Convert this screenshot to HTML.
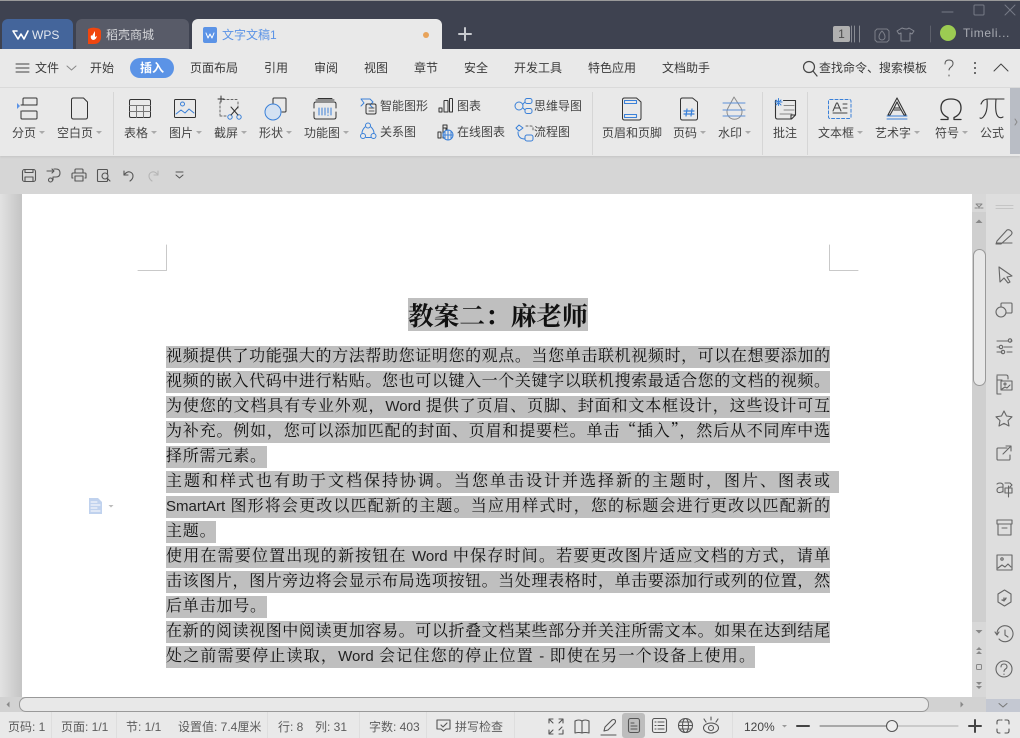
<!DOCTYPE html>
<html lang="zh-CN"><head><meta charset="utf-8"><title>文字文稿1</title>
<style>
html,body{margin:0;padding:0;width:1020px;height:738px;overflow:hidden;background:#d6d6d6}
body{position:relative;font-family:"Liberation Sans","Noto Sans CJK SC",sans-serif;font-size:12px;color:#3c3c3c}
.b{position:absolute}
.t{position:absolute;white-space:nowrap;line-height:16px;font-size:12px;color:#444}
.c:after{content:"";position:absolute;right:-9px;top:6px;border:3px solid transparent;border-top:3px solid #aaa;border-bottom:0}
.m{position:absolute;white-space:nowrap;top:60px;line-height:16px;font-size:12px;color:#3a3a3a}
.s{position:absolute;white-space:nowrap;top:719px;line-height:16px;font-size:12px;color:#5c5c5c}
.l{position:absolute;left:166px;width:664px;height:22px;line-height:18px;background:#bfbfbf;font-family:"Noto Serif CJK SC",serif;font-size:16px;color:#111;white-space:nowrap;text-align:justify;text-align-last:justify}
.l b{font-weight:normal;font-family:"Liberation Sans",sans-serif;font-size:15px;color:#222}
.sep{position:absolute;width:1px;background:#d6d6d6}
svg{position:absolute;left:0;top:0}
</style></head><body>
<div class="b" style="left:0;top:0;width:1020px;height:49px;background:#3e4250"></div>
<div class="b" style="left:0;top:0;width:1020px;height:1px;background:#9a9a9a"></div>
<div class="b" style="left:2px;top:19px;width:71px;height:30px;background:#44659b;border-radius:6px 6px 0 0"></div>
<div class="b" style="left:76px;top:19px;width:113px;height:30px;background:#585b68;border-radius:6px 6px 0 0"></div>
<div class="b" style="left:192px;top:19px;width:250px;height:30px;background:#e9e9e9;border-radius:6px 6px 0 0"></div>
<div class="t" style="left:32px;top:27px;color:#e4e8f0">WPS</div>
<div class="t" style="left:106px;top:27px;color:#d6d7da">稻壳商城</div>
<div class="t" style="left:222px;top:27px;color:#5b93e6">文字文稿1</div>
<div class="t" style="left:963px;top:25px;color:#a8abb2;letter-spacing:.6px">Timeli...</div>
<div class="b" style="left:833px;top:26px;width:17px;height:16px;background:#b0b0b0;border-radius:2px;text-align:center;line-height:16px;color:#4a4a4a;font-size:12px">1</div>

<div class="b" style="left:0;top:49px;width:1020px;height:38px;background:#e9e9e9;border-bottom:1px solid #dcdcdc"></div>
<div class="b" style="left:0;top:88px;width:1020px;height:68px;background:#e9e9e9;box-shadow:0 1px 2px #c4c4c4"></div>
<div class="b" style="left:1010px;top:88px;width:10px;height:66px;background:#b9bdc5"></div>

<div class="m" style="left:35px">文件</div><div class="m" style="left:90px">开始</div>
<div class="b" style="left:130px;top:58px;width:44px;height:20px;background:#5b93e6;border-radius:10px;color:#fff;text-align:center;line-height:20px;font-weight:bold">插入</div>
<div class="m" style="left:190px">页面布局</div><div class="m" style="left:264px">引用</div><div class="m" style="left:314px">审阅</div><div class="m" style="left:364px">视图</div><div class="m" style="left:414px">章节</div><div class="m" style="left:464px">安全</div><div class="m" style="left:514px">开发工具</div><div class="m" style="left:588px">特色应用</div><div class="m" style="left:662px">文档助手</div><div class="m" style="left:819px">查找命令、搜索模板</div>

<div class="sep" style="left:113px;top:92px;height:63px"></div><div class="sep" style="left:592px;top:92px;height:63px"></div><div class="sep" style="left:762px;top:92px;height:63px"></div><div class="sep" style="left:807px;top:92px;height:63px"></div>

<div class="t c" style="left:12px;top:125px">分页</div><div class="t c" style="left:57px;top:125px">空白页</div><div class="t c" style="left:124px;top:125px">表格</div><div class="t c" style="left:169px;top:125px">图片</div><div class="t c" style="left:214px;top:125px">截屏</div><div class="t c" style="left:259px;top:125px">形状</div><div class="t c" style="left:304px;top:125px">功能图</div>
<div class="t" style="left:380px;top:98px">智能图形</div><div class="t" style="left:380px;top:124px">关系图</div><div class="t" style="left:457px;top:98px">图表</div><div class="t" style="left:457px;top:124px">在线图表</div><div class="t" style="left:534px;top:98px">思维导图</div><div class="t" style="left:534px;top:124px">流程图</div>
<div class="t" style="left:602px;top:125px">页眉和页脚</div><div class="t c" style="left:673px;top:125px">页码</div><div class="t c" style="left:718px;top:125px">水印</div><div class="t" style="left:773px;top:125px">批注</div><div class="t c" style="left:818px;top:125px">文本框</div><div class="t c" style="left:875px;top:125px">艺术字</div><div class="t c" style="left:935px;top:125px">符号</div><div class="t" style="left:980px;top:125px">公式</div>

<!-- document -->
<div class="b" style="left:0;top:194px;width:22px;height:503px;background:linear-gradient(90deg,#e2e2e2 0,#c4c4c4 100%)"></div>
<div class="b" style="left:22px;top:194px;width:950px;height:503px;background:#fff"></div>
<div class="b" style="left:972px;top:194px;width:14px;height:518px;background:#d8d8d8"></div>
<div class="b" style="left:972px;top:212px;width:14px;height:410px;background:#cfcfcf"></div>
<div class="b" style="left:986px;top:194px;width:34px;height:518px;background:#dedede"></div>
<div class="b" style="left:973px;top:249px;width:11px;height:135px;background:#e8e8e8;border:1px solid #999;border-radius:7px"></div>
<div class="b" style="left:0;top:697px;width:986px;height:15px;background:#d2d2d2"></div>
<div class="b" style="left:19px;top:697px;width:908px;height:13px;background:#e8e8e8;border:1px solid #999;border-radius:7px"></div>
<div class="b" style="left:986px;top:699px;width:34px;height:13px;background:#c4c8d2"></div>

<div class="b" style="left:408px;top:298px;width:180px;height:33px;line-height:33px;background:#bfbfbf;font-family:'Noto Serif CJK SC',serif;font-weight:bold;font-size:25.7px;color:#111;white-space:nowrap">教案二&#65306;麻老师</div>

<div class="l" style="top:346px">视频提供了功能强大的方法帮助您证明您的观点。当您单击联机视频时&#65292;可以在想要添加的</div>
<div class="l" style="top:371px">视频的嵌入代码中进行粘贴。您也可以键入一个关键字以联机搜索最适合您的文档的视频。</div>
<div class="l" style="top:396px">为使您的文档具有专业外观&#65292;<b>Word</b> 提供了页眉、页脚、封面和文本框设计&#65292;这些设计可互</div>
<div class="l" style="top:421px">为补充。例如&#65292;您可以添加匹配的封面、页眉和提要栏。单击“插入”&#65292;然后从不同库中选</div>
<div class="l" style="top:446px;width:101px;text-align:left;text-align-last:left;letter-spacing:.8px">择所需元素。</div>
<div class="l" style="top:471px;padding-right:9px">主题和样式也有助于文档保持协调。当您单击设计并选择新的主题时&#65292;图片、图表或</div>
<div class="l" style="top:496px"><b>SmartArt</b> 图形将会更改以匹配新的主题。当应用样式时&#65292;您的标题会进行更改以匹配新的</div>
<div class="l" style="top:521px;width:50px;text-align:left;text-align-last:left;letter-spacing:.8px">主题。</div>
<div class="l" style="top:546px">使用在需要位置出现的新按钮在 <b>Word</b> 中保存时间。若要更改图片适应文档的方式&#65292;请单</div>
<div class="l" style="top:571px">击该图片&#65292;图片旁边将会显示布局选项按钮。当处理表格时&#65292;单击要添加行或列的位置&#65292;然</div>
<div class="l" style="top:596px;width:101px;text-align:left;text-align-last:left;letter-spacing:.8px">后单击加号。</div>
<div class="l" style="top:621px">在新的阅读视图中阅读更加容易。可以折叠文档某些部分并关注所需文本。如果在达到结尾</div>
<div class="l" style="top:646px;width:589px">处之前需要停止读取&#65292;<b>Word</b> 会记住您的停止位置 <b>-</b> 即使在另一个设备上使用。</div>

<!-- status bar -->
<div class="b" style="left:0;top:712px;width:1020px;height:26px;background:#e9e9e9"></div>
<div class="s" style="left:8px">页码: 1</div><div class="s" style="left:61px">页面: 1/1</div><div class="s" style="left:126px">节: 1/1</div><div class="s" style="left:178px">设置值: 7.4厘米</div><div class="s" style="left:278px">行: 8</div><div class="s" style="left:315px">列: 31</div><div class="s" style="left:369px">字数: 403</div><div class="s" style="left:455px">拼写检查</div>
<div class="s" style="left:744px;color:#444">120%</div>
<div class="sep" style="left:51px;top:712px;height:26px;background:#dedede"></div><div class="sep" style="left:116px;top:712px;height:26px;background:#dedede"></div><div class="sep" style="left:267px;top:712px;height:26px;background:#dedede"></div><div class="sep" style="left:359px;top:712px;height:26px;background:#dedede"></div><div class="sep" style="left:426px;top:712px;height:26px;background:#dedede"></div><div class="sep" style="left:514px;top:712px;height:26px;background:#dedede"></div><div class="sep" style="left:732px;top:712px;height:26px;background:#dedede"></div>
<div class="b" style="left:622px;top:713px;width:23px;height:25px;background:#bdbdbd;border-radius:3px"></div>

<svg width="1020" height="738" viewBox="0 0 1020 738" fill="none" stroke-width="1" stroke-linecap="round" stroke-linejoin="round">
<!-- tabs -->
<path d="M13 31l5 8 3-5 3 5 4-8M13 31h4" stroke="#fff" stroke-width="1.600"/>
<path d="M88 29q4-2 8-1 4 0 5 3v7q-1 6-7 6h-6z" fill="#f0460f"/><path d="M95 31l-3 5-1-1q-1 4 2 5 3 0 4-4l-2 1z" fill="#fff"/>
<rect x="203" y="27" width="14" height="16" rx="2" fill="#5b93e6"/><path d="M206 33l2 5 2-4 2 4 2-5" stroke="#fff"/>
<circle cx="426" cy="35" r="3" fill="#e8a35a"/>
<path d="M465 28v12M459 34h12" stroke="#c9cbd0" stroke-width="2"/>
<!-- window -->
<path d="M942 12h11" stroke="#777b86"/><rect x="974" y="5" width="10" height="10" rx="1" stroke="#777b86"/><path d="M1005 5l10 10M1015 5l-10 10" stroke="#777b86"/>
<path d="M851.500 26v16M854.500 26v16M859.500 26v16" stroke="#878a92"/><path d="M930.500 26v16" stroke="#5d606b"/>
<path d="M877 29h10l2 2v9l-2 2h-10l-2-2v-9z" stroke="#7c7f89"/><path d="M882 31q3 3 3 6a3 3 0 0 1-6 0q0-3 3-6z" stroke="#7c7f89"/>
<path d="M902 28l-5 3 2 3 2-1v8h9v-8l2 1 2-3-5-3q-2 2-7 0z" stroke="#868993"/>
<circle cx="948" cy="33" r="8" fill="#9ccb52"/>
<!-- menu -->
<path d="M16 64h13M16 68h13M16 72h13" stroke="#444"/><path d="M67 66l4.500 4 4.500-4" stroke="#888"/>
<circle cx="809" cy="67" r="5.500" stroke="#444" stroke-width="1.200"/><path d="M813 71l4 5" stroke="#444" stroke-width="1.200"/>
<path d="M945 64q0-4 4-4t4 3.500q0 2-2 3.500t-2 3M949 75v1" stroke="#555"/>
<circle cx="975" cy="63" r="1" fill="#444"/><circle cx="975" cy="68" r="1" fill="#444"/><circle cx="975" cy="73" r="1" fill="#444"/>
<path d="M994 71l7-7 7 7" stroke="#444"/>
<!-- ribbon black -->
<g stroke="#333">
<path d="M23 105v-6q0-1 1-1h12q1 0 1 1v5q0 1-1 1H23zM21 105h16M22 111h14q1 0 1 1v6q0 1-1 1H22q-1 0-1-1v-7"/>
<path d="M71.500 100q0-2 2-2h10l4 4v15q0 2-2 2h-12q-2 0-2-2z"/>
<rect x="129.500" y="99.500" width="21" height="18" rx="1.500"/><path d="M129.500 105.500h21M129.500 111.500h21M136.500 105.500v12M143.500 105.500v12" stroke="#777"/>
<rect x="174.500" y="99.500" width="21" height="18" rx="1"/>
<path d="M220 102v13M238 102v6M223 99.500h15M220 116h8" stroke="#666" stroke-dasharray="2 2"/><path d="M218 99h6M221 96v6" stroke="#333"/>
<path d="M273 110V99q0-1 1-1h11q1 0 1 1v12q0 1-1 1h-3"/>
<path d="M314 104q0-2 2-2h18q2 0 2 2v4M314 112v5q0 2 2 2h18q2 0 2-2v-5M314 108v-4M316 100h18M318 98.500h14"/>
<path d="M439 112v-4h3v4zM444 112v-11q0-.5.500-.5h3q.500 0 .500.500v11zM449.500 112V99q0-.5.500-.5h2q.500 0 .500.500v13z"/>
<path d="M438 138v-6h3v6zM443 138v-10h3v10zM443 128v-3h4v7"/>
<path d="M622.500 100q0-2 2-2h12l4.500 4v16q0 2-2 2h-14.500q-2 0-2-2z"/>
<path d="M680.500 100q0-2 2-2h10l5 4v16q0 2-2 2h-13q-2 0-2-2z"/>
<path d="M775.500 100.500v16.500q0 2 2 2h14l4-4v-14.500h-12M791 119v-4h4" stroke-width="1.100"/><path d="M784 105.500h10M784 110h10M780 114h12" stroke="#888"/>
<path d="M897 98l-9 17 2 0 4-7h6l4 7 2 0zM897 102l-3 6M897 102l3 6" stroke-width="1.100"/>
<path d="M941 119.500h7v-2q-7-3-7-9.500 0-9 10-9t10 9q0 6.500-7 9.500v2h7" stroke-width="1.300"/>
<path d="M981 104q2-5 7-5h16M987 99q1 12-3 17q-2 3-4 2M996 99q-1 12 1 16q2 4 6 2" stroke-width="1.100"/>
</g>
<path d="M734 97l-6 11a7.500 7.500 0 1 0 13 0z" stroke="#8c8c8c"/>
<!-- ribbon blue -->
<g stroke="#3a80d8">
<path d="M17 103l3 3-3 3z" fill="#5b93e6" stroke="none"/>
<circle cx="182.500" cy="104" r="2"/><path d="M176 114l5-4 4 3 4-4 5 4"/>
<circle cx="230" cy="117" r="2.200"/><circle cx="239" cy="117" r="2.200"/><path d="M231 115l7-8M238 115l-7-8" stroke="#333"/>
<circle cx="273" cy="112" r="8" fill="#d3e1f2"/>
<path d="M319 108v7M322 108v7M325 108v7M328 108v5M331 108v7M328 115v.5"/>
<path d="M361 99h9l3 3-3 3 3 3h-3M361 99l3 4-3 3"/><rect x="366" y="104" width="10" height="10" rx="1.500" stroke="#333"/><path d="M369 108h5M369 111h5" stroke="#555"/>
<circle cx="368" cy="125.500" r="2.500"/><circle cx="363" cy="136" r="2.500"/><circle cx="373.500" cy="136" r="2.500"/><path d="M365 127q-3 3-3 6M371 127q3 3 3 6M366 137.500h5"/>
<circle cx="448" cy="135" r="5" fill="#e9e9e9"/><path d="M443 135h10M448 130v10M445 132v6M451 132v6"/>
<circle cx="519" cy="106" r="4"/><rect x="525" y="98.500" width="7" height="5" rx="2"/><rect x="525" y="108.500" width="7" height="5" rx="2"/><path d="M523 104l2-2M523 108l2 2"/>
<rect x="525" y="135" width="8" height="6" rx="2"/><path d="M519 125l4 3-4 3-3-3zM518 132q0 7 7 7"/><path d="M526 126h5q2 0 2 2v3" stroke="#666" stroke-dasharray="2 2"/>
<path d="M624.500 100.500h12v3h-12zM624.500 114.500h12v3h-12z" stroke-width="1.100"/>
<path d="M687 109l-1 7M692 109l-1 7M684 111h10M684 114h10" stroke-width="1.200"/>
<path d="M723 103h22M723 110h22M723 116h22" stroke="#5a8ed8"/>
<path d="M775 102h7M778.500 98.500v7M776 100l5 5M781 100l-5 5"/>
<rect x="828.500" y="99.500" width="22.500" height="19" rx="1.500" stroke-dasharray="3 2"/>
<path d="M887 116h20M887 119h20"/>
</g>
<path d="M833 111l3.500-8h1l3.500 8M834.500 108h5M843 104h4M843 108h4M833 113h14" stroke="#444"/>
<path d="M894 110h6" stroke="#333"/>
<path d="M1015 119l2 3-2 3" stroke="#888"/>
<!-- quick toolbar -->
<g stroke="#555" stroke-width="1.100">
<rect x="22.500" y="169.500" width="13" height="12" rx="2"/><path d="M25 169.500v3h8v-3M25 181v-4h8v4"/>
<path d="M47 171h7M52 169l2 2-2 2M54 169h2q4 0 4 4t-4 4h-3v3"/><circle cx="50.500" cy="180" r="2"/>
<path d="M75 173v-3q0-1 1-1h6q1 0 1 1v3M73 178h-1v-4q0-1 1-1h12q1 0 1 1v4h-1M75 176h8v5h-8z"/>
<rect x="97.500" y="169.500" width="10" height="12" rx="1"/><circle cx="105" cy="176" r="3" fill="#d6d6d6"/><path d="M107 178l3 3"/>
<path d="M124 171v4h4M124 175q3-4 6-3 3 1 3 4t-3 5"/>
</g>
<path d="M158 171v4h-4M158 175q-3-4-6-3-3 1-3 4t3 5" stroke="#b5b5b5" stroke-width="1.100"/>
<path d="M176 172h7M176 175l3.500 3 3.500-3" stroke="#555"/>
<!-- crop marks -->
<path d="M138 270.500h28.500V245M858 270.500h-28.500V245" stroke="#c9c9c9"/>
<!-- doc icon -->
<path d="M89 498h9l4 4v12H89z" fill="#c0d2ee"/><path d="M91 502h6M91 505h9M91 508h6M91 511h9" stroke="#fff"/>
<path d="M108.500 505h5l-2.500 2.500z" fill="#bbb"/>
<!-- scroll arrows -->
<path d="M975.500 223l3.500-3.500 3.500 3.500z" fill="#888"/>
<path d="M976 204h6l-3 3zM975 208h2M978 208h2M981 208h2" stroke="#888"/>
<path d="M975.500 630h7l-3.500 3.500z" fill="#888"/>
<path d="M976 650l3-3 3 3zM976 654l3-3 3 3z" fill="#888"/>
<rect x="976.500" y="664.500" width="5" height="5" rx="1" stroke="#888"/>
<path d="M976 682h6l-3 3zM976 686h6l-3 3z" fill="#888"/>
<path d="M6.500 704.500l3-3v6z" fill="#888"/><path d="M960.500 701.500l3 3-3 3z" fill="#888"/>
<path d="M999 703.500l4 3.500 4-3.500" stroke="#777"/>
<!-- sidebar -->
<path d="M996 205.500h17M996 208.500h17" stroke="#c5c5c5"/>
<g stroke="#666" stroke-width="1.100">
<path d="M997 241l10-11q2-1 4 1t0 4l-10 9-5 0zM997 243h15"/>
<path d="M999 267l1 15 4-4 4 5 2-1-3-5 5-1z"/>
<circle cx="1001" cy="312" r="5"/><path d="M1001 307v-3q0-1 1-1h9q1 0 1 1v8q0 1-1 1h-5"/>
<path d="M997 341h11M1011 341h1M997 347h2M1004 347h8M997 352h5M1007 352h5"/><circle cx="1010" cy="340.500" r="1.700"/><circle cx="1001" cy="347" r="1.700"/><circle cx="1003" cy="352" r="1.700"/>
<path d="M997 375h9q2 0 2 2v2M997 376v18h4M997 380h5"/><rect x="1001" y="381" width="11" height="9"/><circle cx="1005" cy="384" r="1"/><path d="M1002 389l3-2 2 1 3-3"/>
<path d="M1004 411l2.500 5 5.500 .8-4 3.800 1 5.400-5-2.600-5 2.600 1-5.400-4-3.800 5.500-.8z"/>
<path d="M1007 448h-9q-1 0-1 1v10q0 1 1 1h11q1 0 1-1v-4M1003 454l7-7M1006 446h5v5"/>
<path d="M997 484q1-1 3-1t3 1.500v7.500M1003 487q-6 0-6 3t3 2.500 3-2M1005 483h5l2 2-2 2M1005 488h7v5h-7zM1008.500 486v11"/>
<path d="M997 520h15v4h-15zM998 524v11h13v-11M1002 528h5"/>
<rect x="997" y="555" width="15" height="15"/><circle cx="1002" cy="559" r="1.200"/><path d="M998 568l4-3 3 2 3-3 3 3"/>
<path d="M1004.500 590l6.500 4v8l-6.500 4-6.500-4v-8z"/><path d="M1002 600q3 1 4-2M1004 601v-3" stroke-width="1.300"/>
<path d="M997 634a8 8 0 1 1 2 5M995 632l2 3 2-3M1005 630v5l3 2"/>
<circle cx="1004" cy="669" r="8"/><path d="M1001 667q0-3 3-3t3 3q0 1-1.500 2t-1.500 2.500M1004 674v.5"/>
</g>
<!-- status -->
<g stroke="#555" stroke-width="1.100">
<path d="M437 720h13v9h-4l-2.500 2-2.500-2h-4z"/><path d="M441 725l2 2 4-4"/>
<path d="M549 723v-4h4M563 723v-4h-4M549 730v4h4M563 730v4h-4M553 723l-3-3M559 723l3-3M553 730l-3 3M559 730l3-3"/>
<path d="M582 721q-3-2-7 0v12q4-1 7 0 3-1 7 0v-12q-4-2-7 0zM582 721v12"/>
<path d="M601 735h15M604 731l1-4 7-7q2-1 3 0t0 3l-7 7z"/>
<rect x="628.500" y="718.500" width="11" height="14" rx="2"/><path d="M631 723h3M631 726h6M631 729h6"/>
<rect x="652.500" y="718.500" width="14" height="14" rx="2"/><path d="M655 722h1M658 722h6M655 725.500h1M658 725.500h6M655 729h1M658 729h6"/>
<circle cx="685.500" cy="725.500" r="7"/><ellipse cx="685.500" cy="725.500" rx="3" ry="7"/><path d="M678.500 725.500h14M679.500 722h12M679.500 729h12"/>
<ellipse cx="711" cy="728" rx="7.500" ry="5"/><circle cx="711" cy="728" r="2.500"/><path d="M704 719l2 3M711 717v3M718 719l-2 3"/>
<path d="M1002 720h-1M997 724v-2q0-2 2-2h1M1005 720h2q2 0 2 2v2M997 729v2q0 2 2 2h1M1005 733h2q2 0 2-2v-2"/>
</g>
<path d="M782 725h5l-2.500 2.500z" fill="#999"/>
<path d="M797 726h12M969 726h12M975 720v12" stroke="#444" stroke-width="2"/>
<path d="M820 726h68" stroke="#666"/><path d="M897 726h61" stroke="#aaa"/>
<circle cx="892" cy="726" r="5.500" fill="#eee" stroke="#555" stroke-width="1.100"/>
</svg>
</body></html>
